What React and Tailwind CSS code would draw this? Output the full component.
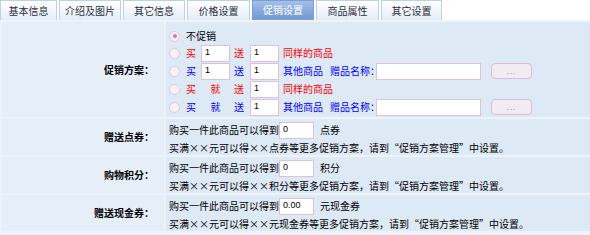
import React from "react";

const font = { fontFamily: '"Noto Sans CJK SC", "Liberation Sans", sans-serif' };

function Radio({ checked }) {
  return (
    <span className="inline-flex items-center justify-center w-[11px] h-[11px] rounded-full border border-[#e2c6de] bg-[#f8f2f8] mr-[6px] shrink-0">
      {checked && <span className="w-[4px] h-[4px] rounded-full bg-[#e070b0]" />}
    </span>
  );
}

function Inp({ w, v }) {
  return (
    <span
      className="inline-flex items-start shrink-0 w-[29px] h-[17px] bg-white border border-[#dcc0dc] text-[9px] leading-[11px] pl-[3px] pt-[1px] text-black"
      style={{ fontFamily: '"Liberation Sans", sans-serif', ...(w ? { width: w } : {}) }}
    >
      {v}
    </span>
  );
}

function Btn() {
  return (
    <span className="inline-flex items-center justify-center shrink-0 w-[41px] h-[16px] rounded-[4px] border border-[#dcbcdc] bg-[#f2ecf2] text-[8px] leading-[8px] text-[#a090a0] tracking-[1px] ml-[10px]">
      ...
    </span>
  );
}

const tabs = ["基本信息", "介绍及图片", "其它信息", "价格设置", "促销设置", "商品属性", "其它设置"];
const tabW = [57, 62, 62, 63, 62, 63, 61];

function Row({ label, children, h }) {
  return (
    <div className="flex gap-[2px]" style={{ height: h }}>
      <div className="w-[162px] shrink-0 bg-[#e6eef8] flex items-center justify-end pr-[10px] font-bold text-[10px] leading-[12px] text-black">
        {label}
      </div>
      <div className="flex-1 bg-[#dee9f6] pl-[3px] text-[10px] leading-[12px] text-black whitespace-nowrap">
        {children}
      </div>
    </div>
  );
}

function Line({ h, children }) {
  return (
    <div className="flex items-center" style={{ height: h }}>
      {children}
    </div>
  );
}

function GiftLine({ color, jiu, same }) {
  const c = color === "red" ? "text-[#ff0000]" : "text-[#0000ff]";
  return (
    <Line h={18}>
      <Radio />
      <span className={`${c} w-[10px] mr-[5px]`}>买</span>
      {jiu ? <span className={`${c} w-[29px] text-center`}>就</span> : <Inp v="1" />}
      <span className={`${c} w-[10px] ml-[4px] mr-[6px]`}>送</span>
      <Inp v="1" />
      {same ? (
        <span className={`${c} ml-[4px]`}>同样的商品</span>
      ) : (
        <>
          <span className={`${c} ml-[4px]`}>其他商品</span>
          <span className={`${c} ml-[7px] w-[46px] overflow-visible`}>赠品名称：</span>
          <span className="inline-block shrink-0 w-[105px] h-[17px] bg-white border border-[#dcc0dc]" />
          <Btn />
        </>
      )}
    </Line>
  );
}

function PointRow({ label, v, unit, desc }) {
  return (
    <Row label={label} h={36}>
      <div className="flex flex-col pt-[1px]">
        <Line h={20}>
          <span>购买一件此商品可以得到</span>
          <Inp w={35} v={v} />
          <span className="ml-[6px]">{unit}</span>
        </Line>
        <div className="h-[15px] flex items-center">{desc}</div>
      </div>
    </Row>
  );
}

export default function App() {
  return (
    <div className="w-[590px] h-[235px] bg-white overflow-hidden" style={font}>
      <div className="flex gap-[2px] h-[20px]">
        {tabs.map((t, i) => (
          <div
            key={t}
            className={
              i === 4
                ? "h-[20px] flex items-center justify-center text-[10px] leading-[12px] text-white border border-[#7aa0d4] bg-gradient-to-b from-[#a3c0e8] to-[#7099d2]"
                : "h-[20px] flex items-center justify-center text-[10px] leading-[12px] text-[#2a2f3a] border border-[#bcd0ea] border-b-0 bg-gradient-to-b from-white to-[#e4edf8]"
            }
            style={{ width: tabW[i] }}
          >
            {t}
          </div>
        ))}
      </div>
      <div className="flex flex-col gap-[2px] bg-[#eef3fa] pt-[2px] pl-[2px] h-[215px]">
        <Row label="促销方案：" h={95}>
          <div className="flex flex-col pt-[6px]">
            <Line h={16}>
              <Radio checked />
              <span>不促销</span>
            </Line>
            <GiftLine color="red" same />
            <GiftLine color="blue" />
            <GiftLine color="red" jiu same />
            <GiftLine color="blue" jiu />
          </div>
        </Row>
        <PointRow
          label="赠送点券："
          v="0"
          unit="点券"
          desc="买满××元可以得××点券等更多促销方案，请到“促销方案管理”中设置。"
        />
        <PointRow
          label="购物积分："
          v="0"
          unit="积分"
          desc="买满××元可以得××积分等更多促销方案，请到“促销方案管理”中设置。"
        />
        <PointRow
          label="赠送现金券："
          v="0.00"
          unit="元现金券"
          desc="买满××元可以得××元现金券等更多促销方案，请到“促销方案管理”中设置。"
        />
      </div>
    </div>
  );
}
